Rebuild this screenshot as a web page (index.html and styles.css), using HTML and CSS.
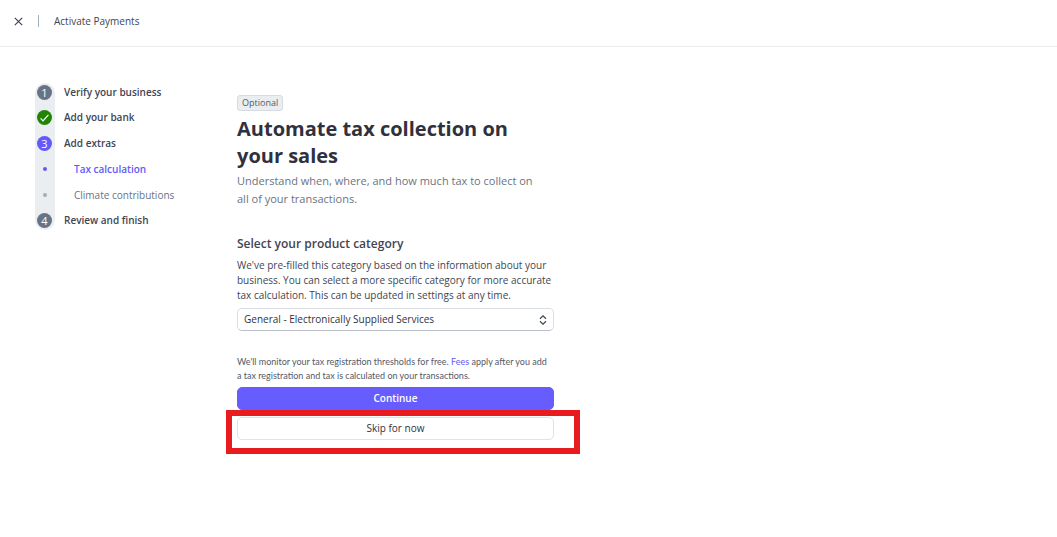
FILE: index.html
```html
<!DOCTYPE html>
<html lang="en">
<head>
  <meta charset="UTF-8">
  <meta name="viewport" content="width=device-width, initial-scale=1">
  <title>Activate Payments</title>
  <link rel="stylesheet" href="styles.css">
</head>
<body>
  <!-- Top bar -->
  <header class="topbar">
    <button class="close-btn" type="button" aria-label="Close">
      <svg width="9" height="9" viewBox="0 0 9 9"><path d="M.8.8l7.4 7.4M8.2.8L.8 8.2"/></svg>
    </button>
    <span class="divider"></span>
    <span class="topbar-title">Activate Payments</span>
  </header>

  <div class="layout">
    <!-- Steps -->
    <nav class="steps-nav" aria-label="Setup steps">
      <ol class="steps">
        <li class="step"><span class="marker">1</span><a href="#business">Verify your business</a></li>
        <li class="step">
          <span class="marker done">
            <svg width="9" height="8" viewBox="0 0 9 8"><path d="M.6 4.4l2.4 2.5L8.4.8"/></svg>
          </span>
          <a href="#bank">Add your bank</a>
        </li>
        <li class="step"><span class="marker current">3</span><a href="#extras">Add extras</a></li>
        <li class="step substep active"><span class="marker-dot"></span><a href="#tax" aria-current="step">Tax calculation</a></li>
        <li class="step substep"><span class="marker-dot"></span><a href="#climate">Climate contributions</a></li>
        <li class="step"><span class="marker">4</span><a href="#review">Review and finish</a></li>
      </ol>
    </nav>

    <!-- Tax form -->
    <main class="content" id="tax">
      <span class="badge">Optional</span>
      <h1>Automate tax collection on your sales</h1>
      <p class="lead">Understand when, where, and how much tax to collect on all of your transactions.</p>

      <form class="tax-form">
        <label class="field-label" for="category">Select your product category</label>
        <p class="field-help" id="category-help">We've pre-filled this category based on the information about your business. You can select a more specific category for more accurate tax calculation. This can be updated in settings at any time.</p>
        <div class="select-wrap">
          <select id="category" aria-describedby="category-help">
            <option>General - Electronically Supplied Services</option>
          </select>
          <svg class="select-icon" width="8" height="10" viewBox="0 0 8 10"><path d="M1 3.7L4 .9l3 2.8M1 6.3l3 2.8 3-2.8"/></svg>
        </div>
        <p class="fees-note">We'll monitor your tax registration thresholds for free. <a href="#fees">Fees</a> apply after you add a tax registration and tax is calculated on your transactions.</p>
        <button class="btn btn-primary" type="button">Continue</button>
        <div class="highlight">
          <button class="btn btn-secondary" type="button">Skip for now</button>
        </div>
      </form>
    </main>
  </div>
</body>
</html>
```
FILE: styles.css
```css
* { box-sizing:border-box; }
body { margin:0; background:#fff; color:#414552; font-family:"Open Sans", "Noto Sans", sans-serif; font-size:10px; line-height:15px; }
h1, p, ol { margin:0; padding:0; }
a { color:inherit; text-decoration:none; }
button, select { font:inherit; }
svg { display:block; fill:none; stroke:currentColor; }

.topbar { height:47px; display:flex; align-items:center; padding:0 14px 4px; border-bottom:1px solid #ebeef1; }
.close-btn { display:flex; padding:0; border:0; background:none; color:#414552; cursor:pointer; }
.close-btn svg { stroke-width:1.2; }
.divider { width:1px; height:12px; margin:0 15px; background:#a3acba; }

.layout { display:grid; grid-template-columns:160px minmax(0, 317px); column-gap:42px; padding:36px 35px; align-items:start; }

.steps { position:relative; z-index:0; height:147px; display:flex; flex-direction:column; justify-content:space-between; padding:1px 0; list-style:none; }
.steps::before { content:""; position:absolute; z-index:-1; top:0; bottom:0; left:0; width:20px; border-radius:10px; background:#ebeef1; }
.step { height:16px; display:flex; align-items:center; padding-left:2px; gap:12px; font-weight:600; white-space:nowrap; }
.marker { flex:none; width:15px; height:15px; display:flex; align-items:center; justify-content:center; border-radius:50%; background:#687385; color:#fff; font-size:11px; font-weight:400; }
.marker.done { background:#228403; }
.marker.current { background:#625afa; }
.marker svg { stroke-width:1.2; }
.substep { padding-left:8px; gap:27px; font-weight:400; color:#687385; }
.substep.active { color:#625afa; font-weight:600; }
.marker-dot { width:4px; height:4px; border-radius:50%; background:#a3acba; }
.active .marker-dot { background:#625afa; }

.content { display:flex; flex-direction:column; padding-top:12px; }
.badge { align-self:flex-start; margin-bottom:4px; padding:0 4px; border:1px solid #d5dbe1; border-radius:3px; background:#ebeef1; color:#545969; font-size:9px; line-height:14px; }
h1 { color:#30313d; font-size:20px; line-height:27px; font-weight:700; }
.lead { margin-top:3px; padding-right:10px; color:#6a7383; font-size:11px; line-height:18px; }

.tax-form { display:flex; flex-direction:column; margin-top:28px; }
.field-label { font-size:12px; line-height:16px; font-weight:600; }
.field-help { margin-top:6px; }
.select-wrap { display:grid; align-items:center; margin-top:5px; }
.select-wrap > * { grid-area:1 / 1; }
select { width:100%; height:23px; padding:0 24px 0 6px; appearance:none; border:1px solid #d8dee4; border-bottom-color:#b9c0ca; border-radius:5px; background:#fff; color:#30313d; }
.select-icon { justify-self:end; margin-right:7px; pointer-events:none; stroke-width:1.2; }
.fees-note { margin:24px 0 4px; padding-right:4px; color:#545969; font-family:Lato, "Open Sans", sans-serif; font-size:9px; line-height:14px; }
.fees-note a { color:#625afa; }
.btn { width:100%; height:23px; padding:0; border:1px solid #dfe3e8; border-radius:5px; background:#fff; color:#30313d; cursor:pointer; }
.btn-primary { border-color:#675dff; background:#675dff; color:#fff; font-weight:600; }
.highlight { position:relative; display:flex; margin-top:7px; }
.highlight::after { content:""; position:absolute; inset:-7px -26px -14px -11px; border:6px solid #e81c1f; pointer-events:none; }
```
